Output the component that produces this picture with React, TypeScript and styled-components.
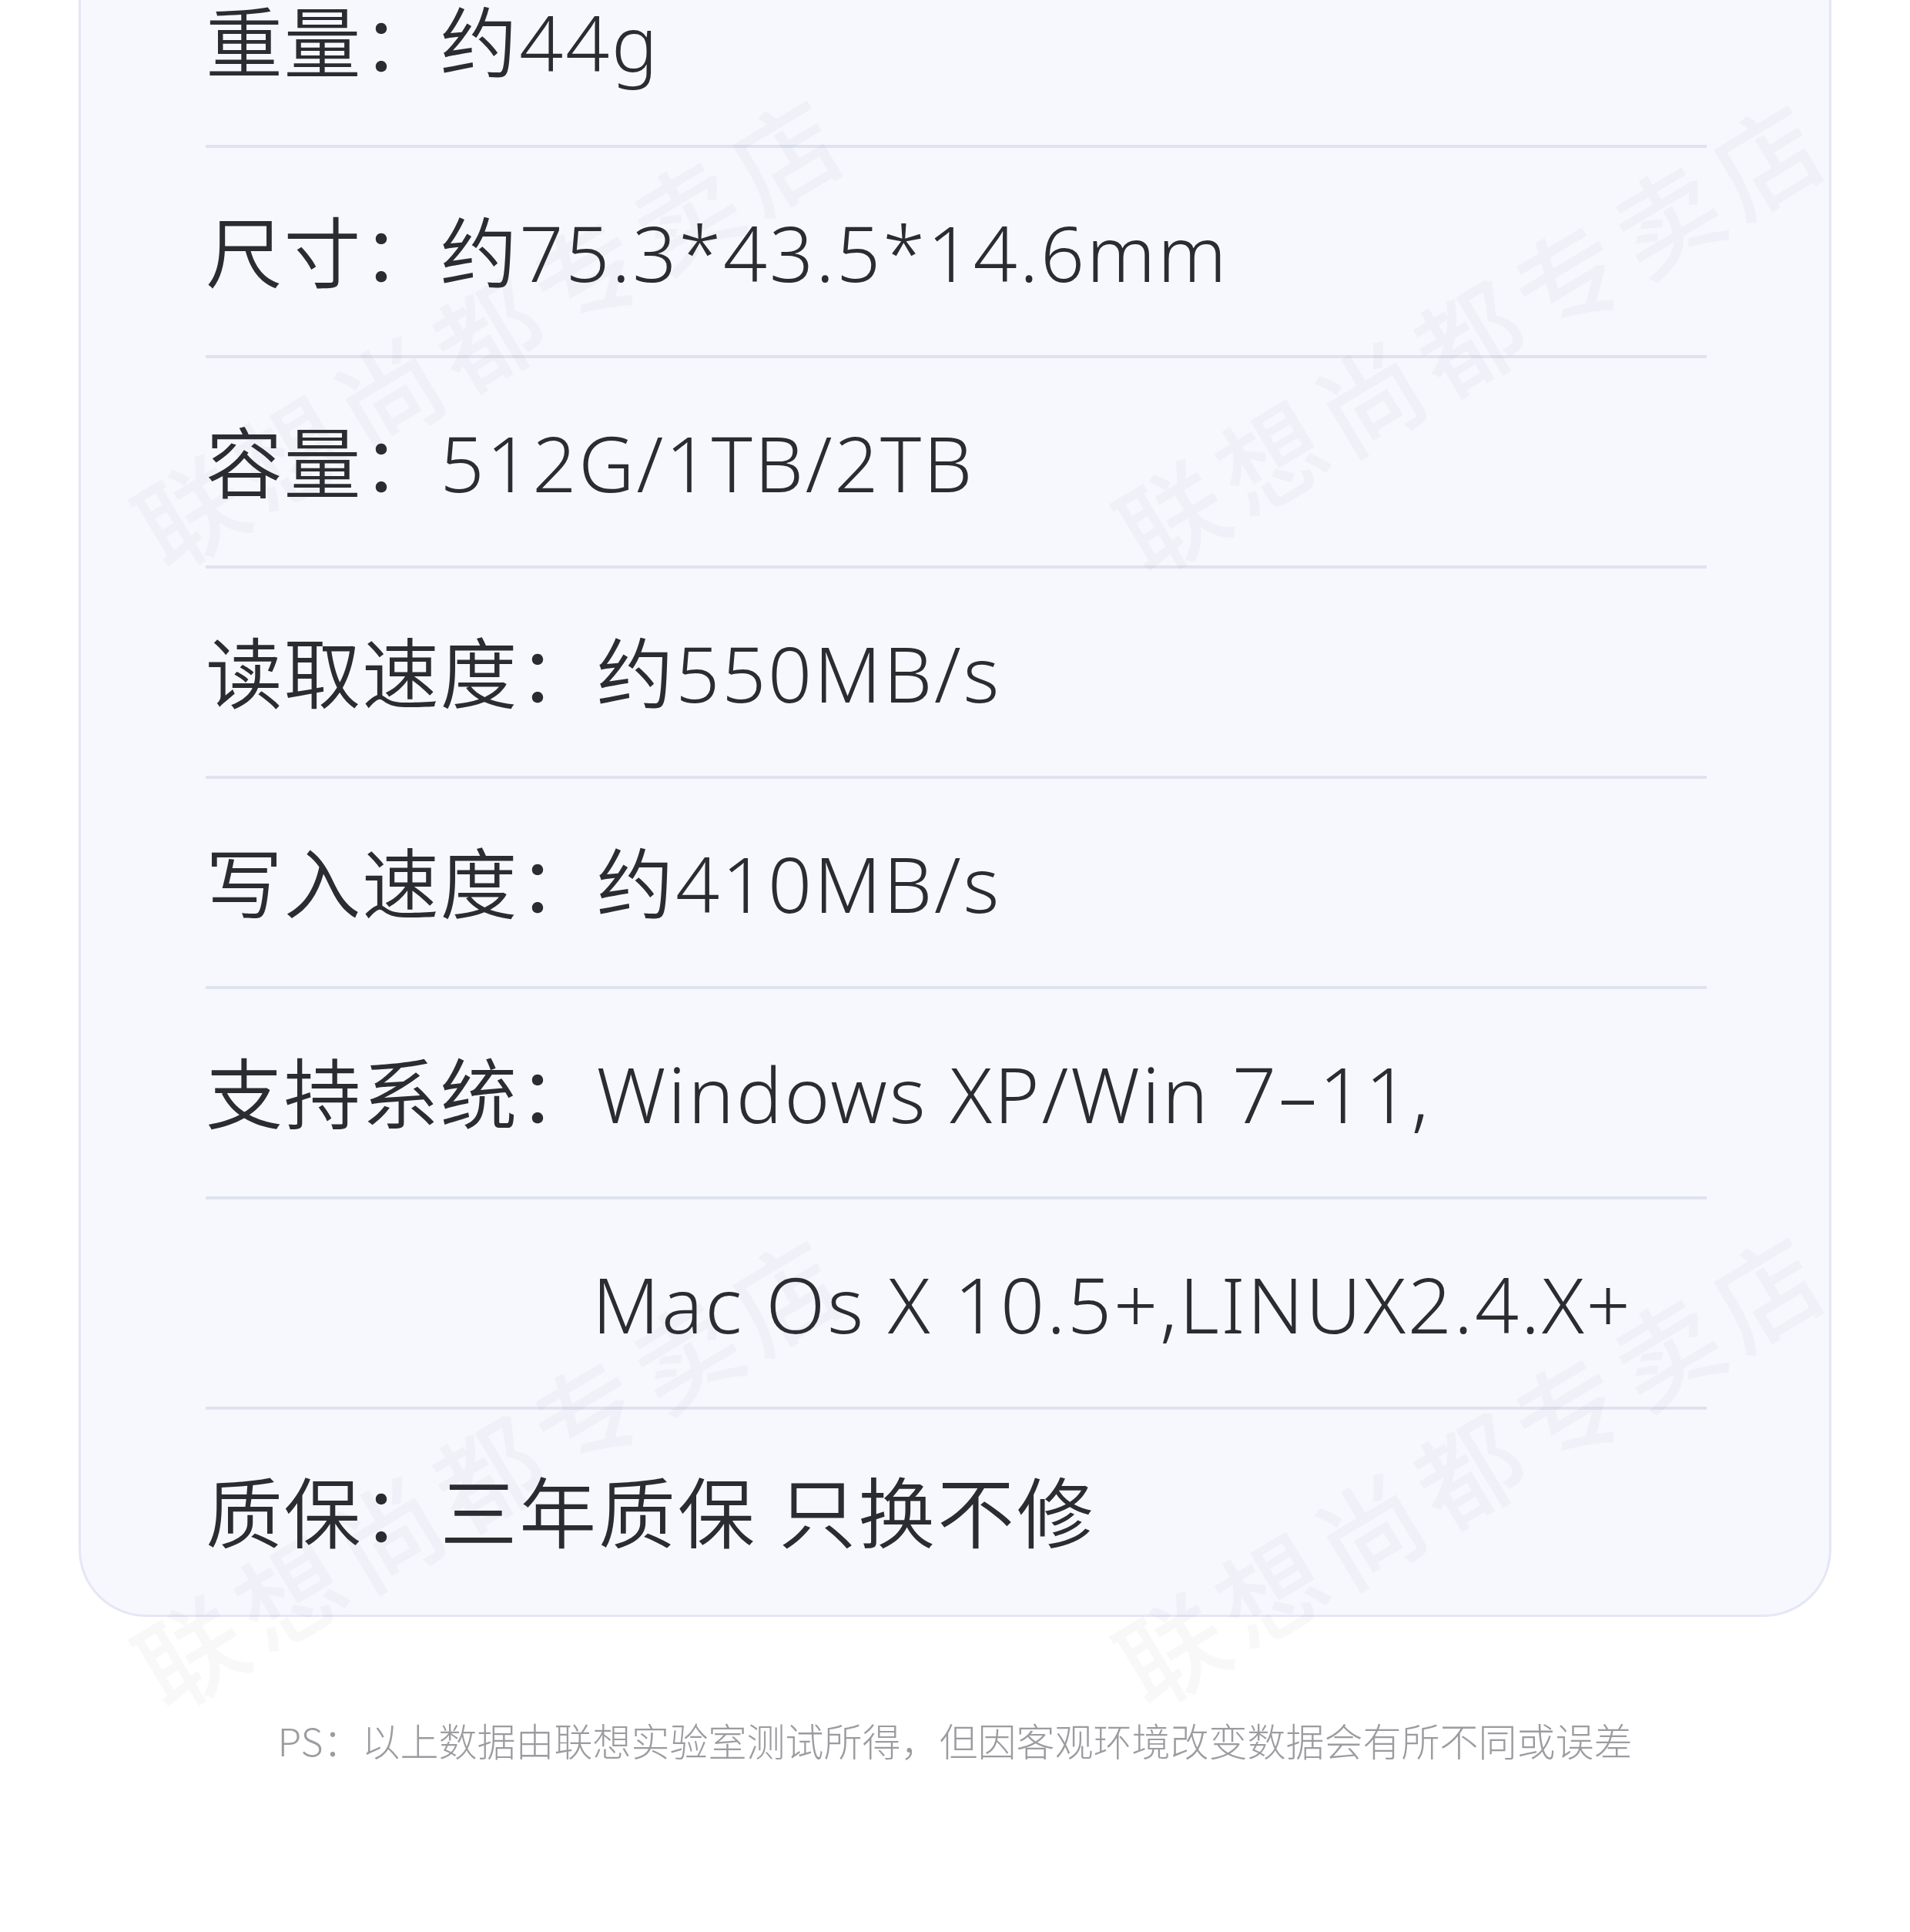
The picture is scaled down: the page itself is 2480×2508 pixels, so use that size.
import React from 'react'
import styled, { createGlobalStyle } from 'styled-components'

const GlobalStyle = createGlobalStyle`
  html, body {
    margin: 0;
    padding: 0;
    background: #ffffff;
  }
  body {
    font-family: "Noto Sans", "Noto Sans CJK SC", sans-serif;
    -webkit-font-smoothing: antialiased;
  }
`

const Page = styled.main`
  position: relative;
  width: 2480px;
  height: 2508px;
  overflow: hidden;
  background: #ffffff;
  display: flex;
  flex-direction: column;
  align-items: stretch;
`

const Card = styled.section`
  margin: -150px 0 0 102px;
  width: 2276px;
  box-sizing: border-box;
  padding: 66px 0 0 162px;
  background: #f7f8fe;
  border: 3px solid #e5e6f6;
  border-radius: 0 0 88px 88px;
`

const Row = styled.div<{ $last?: boolean }>`
  width: 1949px;
  height: ${p => (p.$last ? '266px' : '273px')};
  box-sizing: border-box;
  display: flex;
  align-items: center;
  border-bottom: ${p => (p.$last ? 'none' : '4px solid #dfe2ef')};
  font-size: 100px;
  font-weight: 350;
  line-height: 1;
  letter-spacing: 1.5px;
  color: #2b2c31;
  white-space: nowrap;
`

const Label = styled.span`
  flex: none;
`

const Value = styled.span<{ $indent?: boolean }>`
  padding-left: ${p => (p.$indent ? '502px' : '0')};
  letter-spacing: 2.8px;
`

const Note = styled.p`
  margin: 124px 0 0;
  text-align: center;
  font-family: "Noto Sans CJK SC", sans-serif;
  font-size: 50px;
  font-weight: 300;
  line-height: 1.4;
  letter-spacing: 0;
  color: #9c9ca0;
`

const Watermark = styled.span<{ $x: number; $y: number }>`
  position: absolute;
  left: ${p => p.$x}px;
  top: ${p => p.$y}px;
  transform: translate(-50%, -50%) rotate(-31deg);
  font-family: "Noto Sans CJK SC", sans-serif;
  font-weight: 500;
  font-size: 136px;
  letter-spacing: 14px;
  color: rgba(70, 72, 110, 0.04);
  white-space: nowrap;
  pointer-events: none;
`

type Spec = { label?: string; value: string }

const specs: Spec[] = [
  { label: '重量：', value: '约44g' },
  { label: '尺寸：', value: '约75.3*43.5*14.6mm' },
  { label: '容量：', value: '512G/1TB/2TB' },
  { label: '读取速度：', value: '约550MB/s' },
  { label: '写入速度：', value: '约410MB/s' },
  { label: '支持系统：', value: 'Windows XP/Win 7–11,' },
  { value: 'Mac Os X 10.5+,LINUX2.4.X+' },
  { label: '质保：', value: '三年质保 只换不修' },
]

const marks = [
  { x: 636, y: 424 },
  { x: 1910, y: 430 },
  { x: 636, y: 1904 },
  { x: 1910, y: 1900 },
]

export default function App() {
  return (
    <>
      <GlobalStyle />
      <Page>
        <Card>
          {specs.map((s, i) => (
            <Row key={i} $last={i === specs.length - 1}>
              {s.label && <Label>{s.label}</Label>}
              <Value $indent={!s.label}>{s.value}</Value>
            </Row>
          ))}
        </Card>
        <Note>PS：以上数据由联想实验室测试所得，但因客观环境改变数据会有所不同或误差</Note>
        {marks.map((m, i) => (
          <Watermark key={i} $x={m.x} $y={m.y}>联想尚都专卖店</Watermark>
        ))}
      </Page>
    </>
  )
}
